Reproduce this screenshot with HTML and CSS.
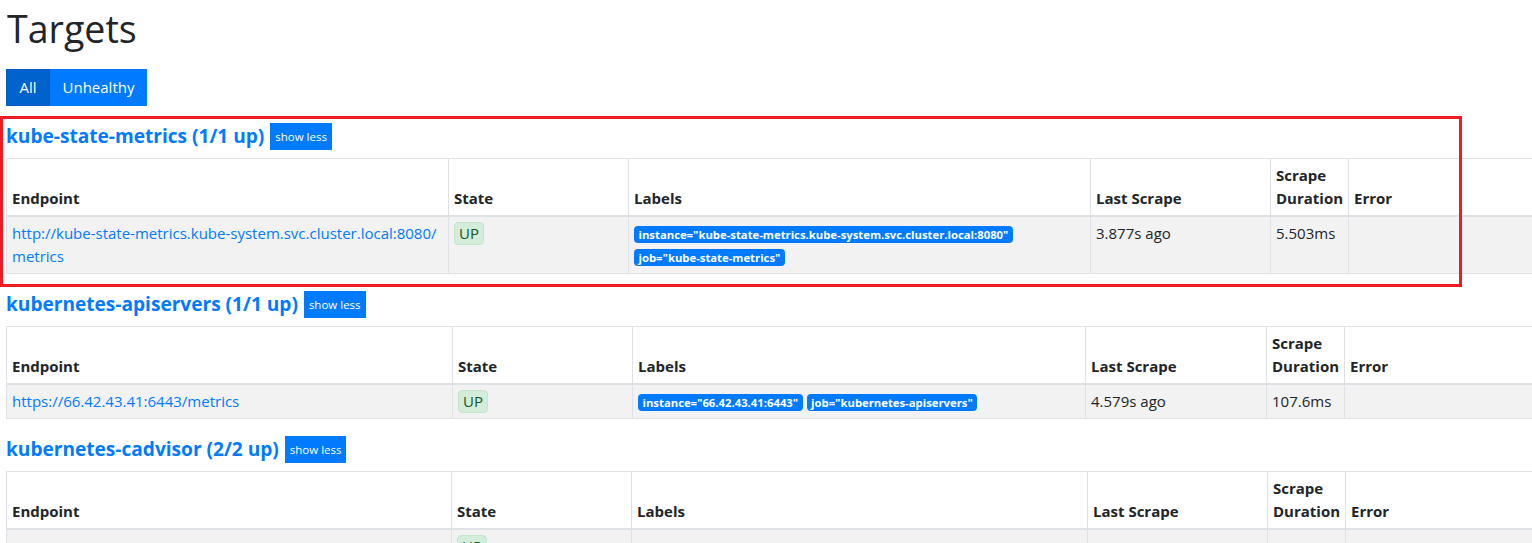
FILE: index.html
```html
<!DOCTYPE html>
<html lang="en">

<head>
    <meta charset="UTF-8">
    <meta name="viewport" content="width=device-width, initial-scale=1.0">
    <title>Prometheus Time Series Collection and Processing Server</title>
    <link rel="stylesheet" href="styles.css">
</head>

<body>
    <h1 class="page-title">Targets</h1>

    <!-- Filter buttons -->
    <div class="btn-group">
        <button class="btn btn-all btn-active">All</button>
        <button class="btn btn-unhealthy">Unhealthy</button>
    </div>

    <!-- Job: kube-state-metrics -->
    <div class="job job-ksm">
        <div class="job-header">
            <a class="job-title" href="#job-kube-state-metrics">kube-state-metrics (1/1 up)</a>
            <button class="btn-xs">show less</button>
        </div>
        <table class="targets">
            <colgroup>
                <col class="c-endpoint"><col class="c-state"><col class="c-labels"><col class="c-last"><col class="c-dur"><col>
            </colgroup>
            <thead>
                <tr>
                    <th>Endpoint</th>
                    <th>State</th>
                    <th>Labels</th>
                    <th>Last Scrape</th>
                    <th>Scrape Duration</th>
                    <th>Error</th>
                </tr>
            </thead>
            <tbody>
                <tr>
                    <td><a href="#">http://kube-state-metrics.kube-system.svc.cluster.local:8080/<wbr>metrics</a></td>
                    <td><span class="state-up">UP</span></td>
                    <td>
                        <span class="badge">instance="kube-state-metrics.kube-system.svc.cluster.local:8080"</span>
                        <span class="badge">job="kube-state-metrics"</span>
                    </td>
                    <td>3.877s ago</td>
                    <td>5.503ms</td>
                    <td></td>
                </tr>
            </tbody>
        </table>
    </div>

    <!-- Job: kubernetes-apiservers -->
    <div class="job job-api">
        <div class="job-header">
            <a class="job-title" href="#job-kubernetes-apiservers">kubernetes-apiservers (1/1 up)</a>
            <button class="btn-xs">show less</button>
        </div>
        <table class="targets">
            <colgroup>
                <col class="c-endpoint"><col class="c-state"><col class="c-labels"><col class="c-last"><col class="c-dur"><col>
            </colgroup>
            <thead>
                <tr>
                    <th>Endpoint</th>
                    <th>State</th>
                    <th>Labels</th>
                    <th>Last Scrape</th>
                    <th>Scrape Duration</th>
                    <th>Error</th>
                </tr>
            </thead>
            <tbody>
                <tr>
                    <td><a href="#">https://66.42.43.41:6443/metrics</a></td>
                    <td><span class="state-up">UP</span></td>
                    <td>
                        <span class="badge">instance="66.42.43.41:6443"</span>
                        <span class="badge">job="kubernetes-apiservers"</span>
                    </td>
                    <td>4.579s ago</td>
                    <td>107.6ms</td>
                    <td></td>
                </tr>
            </tbody>
        </table>
    </div>

    <!-- Job: kubernetes-cadvisor -->
    <div class="job job-cad">
        <div class="job-header">
            <a class="job-title" href="#job-kubernetes-cadvisor">kubernetes-cadvisor (2/2 up)</a>
            <button class="btn-xs">show less</button>
        </div>
        <table class="targets">
            <colgroup>
                <col class="c-endpoint"><col class="c-state"><col class="c-labels"><col class="c-last"><col class="c-dur"><col>
            </colgroup>
            <thead>
                <tr>
                    <th>Endpoint</th>
                    <th>State</th>
                    <th>Labels</th>
                    <th>Last Scrape</th>
                    <th>Scrape Duration</th>
                    <th>Error</th>
                </tr>
            </thead>
            <tbody>
                <tr>
                    <td></td>
                    <td><span class="state-up">UP</span></td>
                    <td></td>
                    <td></td>
                    <td></td>
                    <td></td>
                </tr>
            </tbody>
        </table>
    </div>

    <!-- Highlight drawn over the first job -->
    <div class="highlight"></div>
</body>

</html>
```

FILE: styles.css
```css
/* Base */
* {
    box-sizing: border-box;
}

body {
    margin: 0;
    padding: 0 6px;
    font-family: "Open Sans", "Noto Sans", sans-serif;
    font-size: 15px;
    line-height: 23px;
    color: #212529;
    background: #fff;
    overflow: hidden;
}

a {
    color: #007bff;
    text-decoration: none;
}

.page-title {
    margin: 7px 0 18px 1px;
    font-size: 37.6px;
    font-weight: 500;
    line-height: 44px;
}

/* Filter buttons */
.btn-group {
    display: flex;
}

.btn {
    font-family: inherit;
    font-size: 15px;
    line-height: 23px;
    padding: 6px 0;
    color: #fff;
    background-color: #007bff;
    border: 1px solid #007bff;
    border-radius: 0;
}

.btn-all {
    width: 44px;
}

.btn-unhealthy {
    width: 97px;
}

.btn-active {
    background-color: #0062cc;
    border-color: #005cbf;
}

/* Job sections */
.job {
    margin-top: 17px;
}

.job + .job {
    margin-top: 0;
}

.job-header {
    display: flex;
    align-items: center;
    gap: 6px;
    height: 27px;
    margin-bottom: 8px;
}

.job-title {
    font-size: 19.1px;
    font-weight: 700;
}

.btn-xs {
    height: 27px;
    padding: 0 5px;
    font-family: inherit;
    font-size: 11.5px;
    color: #fff;
    background-color: #007bff;
    border: 0;
    border-radius: 0;
}

/* Targets table */
.targets {
    width: 1800px;
    table-layout: fixed;
    border-collapse: collapse;
    margin-bottom: 17px;
}

.targets th,
.targets td {
    padding: 5px 5px;
    border: 1px solid #dee2e6;
    text-align: left;
}

.targets th {
    vertical-align: bottom;
    font-weight: 700;
    border-bottom-width: 2px;
}

.targets td {
    vertical-align: top;
}

.targets tbody tr {
    background-color: #f2f2f2;
}

.job-ksm .c-endpoint { width: 442px; }
.job-ksm .c-state { width: 180px; }
.job-ksm .c-labels { width: 462px; }
.job-ksm .c-last { width: 180px; }
.job-ksm .c-dur { width: 78px; }

.job-api .c-endpoint { width: 446px; }
.job-api .c-state { width: 180px; }
.job-api .c-labels { width: 453px; }
.job-api .c-last { width: 181px; }
.job-api .c-dur { width: 78px; }

.job-cad .c-endpoint { width: 445px; }
.job-cad .c-state { width: 180px; }
.job-cad .c-labels { width: 456px; }
.job-cad .c-last { width: 180px; }
.job-cad .c-dur { width: 78px; }

/* State indicator */
.state-up {
    display: inline-block;
    padding: 0 4px;
    line-height: 21px;
    color: #155724;
    background-color: #d4edda;
    border: 1px solid #c3e6cb;
    border-radius: 4px;
}

/* Label badges */
.badge {
    display: inline-block;
    padding: 3px 4.5px;
    font-size: 11.3px;
    font-weight: 700;
    line-height: 1;
    color: #fff;
    background-color: #007bff;
    border-radius: 4px;
    white-space: nowrap;
}

/* Red annotation box over the first job */
.highlight {
    position: absolute;
    left: 0;
    top: 116px;
    width: 1462px;
    height: 171px;
    border: 3px solid #ed1c24;
    pointer-events: none;
}
```
